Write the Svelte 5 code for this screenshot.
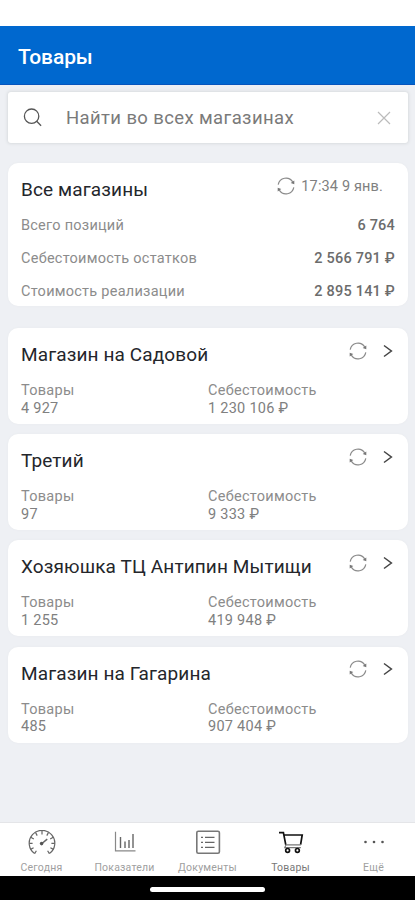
<script lang="ts">
  type Store = { name: string; count: string; cost: string }

  let query = $state('')

  const totals = [
    { label: 'Всего позиций', value: '6 764' },
    { label: 'Себестоимость остатков', value: '2 566 791 ₽' },
    { label: 'Стоимость реализации', value: '2 895 141 ₽' },
  ]

  const stores: Store[] = [
    { name: 'Магазин на Садовой', count: '4 927', cost: '1 230 106 ₽' },
    { name: 'Третий', count: '97', cost: '9 333 ₽' },
    { name: 'Хозяюшка ТЦ Антипин Мытищи', count: '1 255', cost: '419 948 ₽' },
    { name: 'Магазин на Гагарина', count: '485', cost: '907 404 ₽' },
  ]
</script>

{#snippet refresh()}
  <svg class="refresh" viewBox="0 0 18 18" width="18" height="18">
    <path d="M1.2 7.6A7.9 7.9 0 0 1 15.7 4.9M16.8 10.4A7.9 7.9 0 0 1 2.3 13.1" />
    <path class="tip" d="M17.3 3.4v3.8l-3.6-1.1zM.7 14.6v-3.8l3.6 1.1z" />
  </svg>
{/snippet}

<div class="screen">
  <header class="header">
    <h1>Товары</h1>
  </header>

  <main class="content">
    <label class="search">
      <svg class="search-icon" viewBox="0 0 20 20" width="20" height="20">
        <circle cx="8.6" cy="8.2" r="7.2" />
        <path d="M13.7 13.3l4.4 4.4" />
      </svg>
      <input type="text" placeholder="Найти во всех магазинах" bind:value={query} />
      <svg class="clear-icon" viewBox="0 0 14 14" width="14" height="14">
        <path d="M1 1l12 12M13 1L1 13" />
      </svg>
    </label>

    <section class="card summary">
      <div class="card-head">
        <h2>Все магазины</h2>
        <div class="updated">
          {@render refresh()}
          <span>17:34 9 янв.</span>
        </div>
      </div>
      {#each totals as row}
        <div class="total">
          <span class="total-label">{row.label}</span>
          <span class="total-value">{row.value}</span>
        </div>
      {/each}
    </section>

    <div class="stores">
      {#each stores as store}
        <section class="card store">
          <div class="card-head">
            <h2>{store.name}</h2>
            <div class="actions">
              {@render refresh()}
              <svg class="chevron" viewBox="0 0 10 14" width="10" height="14">
                <path d="M1 1.5l7.4 5.5L1 12.5" />
              </svg>
            </div>
          </div>
          <div class="stats">
            <div class="stat">
              <span>Товары</span>
              <span class="num">{store.count}</span>
            </div>
            <div class="stat">
              <span>Себестоимость</span>
              <span class="num">{store.cost}</span>
            </div>
          </div>
        </section>
      {/each}
    </div>
  </main>

  <nav class="tabs">
    <div class="tab">
      <svg viewBox="0 0 28 26" width="28" height="26">
        <path d="M6.6 23.6A12.8 12.8 0 1 1 21.4 23.6" />
        <path d="M14 1v3.4M7.6 2.6l1.6 3M20.4 2.6l-1.6 3M2.8 7.2l3 1.8M25.2 7.2l-3 1.8M1.2 13.3h3.4M26.8 13.3h-3.4M2.6 19.4l3-1.6M25.4 19.4l-3-1.6M6.6 23.6l1.8-2.8M21.4 23.6l-1.8-2.8" />
        <path d="M14.5 13l4.7-3.8" stroke-width="1.5" />
        <circle class="dot" cx="13.6" cy="13.6" r="1.8" />
      </svg>
      <span>Сегодня</span>
    </div>
    <div class="tab">
      <svg viewBox="0 0 28 26" width="28" height="26">
        <path d="M4.5 1.8v19h20" stroke="#888" />
        <path d="M9.5 7v11M14 11.5V18M18 10v8M22 4v14" stroke-width="1.4" />
      </svg>
      <span>Показатели</span>
    </div>
    <div class="tab">
      <svg viewBox="0 0 28 26" width="28" height="26">
        <rect x="2.8" y="1.3" width="22.6" height="22" rx="1.5" stroke="#777" stroke-width="1.6" />
        <path d="M11 7.3h9.5M11 12.3h9.5M11 17.3h9.5M7 7.3h2M7 12.3h2M7 17.3h2" />
      </svg>
      <span>Документы</span>
    </div>
    <div class="tab active">
      <svg viewBox="0 0 28 26" width="28" height="26">
        <path d="M2 2.7h4.4l2.4 12.2M6.8 5h18.4L23.6 14.6" />
        <path class="shelf" d="M8.8 14.8h15M9 14.8L7.8 17.6h16" />
        <circle cx="10.6" cy="20.4" r="1.9" />
        <circle cx="20.4" cy="20.4" r="1.9" />
      </svg>
      <span>Товары</span>
    </div>
    <div class="tab">
      <svg viewBox="0 0 28 26" width="28" height="26">
        <circle class="dot" cx="5.5" cy="12" r="1.3" />
        <circle class="dot" cx="14" cy="12" r="1.3" />
        <circle class="dot" cx="22.5" cy="12" r="1.3" />
      </svg>
      <span>Ещё</span>
    </div>
  </nav>

  <footer class="gesture"><i></i></footer>
</div>

<style>
  :global(body) {
    background: #fff;
  }

  .screen {
    display: flex;
    flex-direction: column;
    box-sizing: border-box;
    height: 900px;
    padding-top: 26px;
    overflow: hidden;
    font-family: Roboto, 'Noto Sans', sans-serif;
    color: #24262b;
  }

  h1,
  h2 {
    margin: 0;
  }

  svg {
    display: block;
    flex-shrink: 0;
    fill: none;
    stroke: #666;
    stroke-width: 1.2;
  }

  .header {
    display: flex;
    align-items: center;
    box-sizing: border-box;
    height: 59px;
    padding: 3px 18px 0;
    background: #0068cf;
    border-bottom: 1px solid #0755bd;
  }
  .header h1 {
    font-size: 21px;
    font-weight: 500;
    line-height: 28px;
    letter-spacing: -0.1px;
    color: #fff;
  }

  .content {
    flex: 1;
    padding: 7px 7px 0 8px;
    background: #eef0f4;
  }

  .search {
    display: flex;
    align-items: center;
    box-sizing: border-box;
    height: 51px;
    padding: 0 17px 0 15px;
    border-radius: 3px;
    background: #fff;
    box-shadow: 0 0 3px 1px #d9dcdf;
  }
  .search input {
    flex: 1;
    min-width: 0;
    margin-left: 23px;
    padding: 0;
    border: 0;
    outline: 0;
    background: none;
    font: 400 18.5px/24px Roboto, 'Noto Sans', sans-serif;
    letter-spacing: 0.38px;
    color: #333;
  }
  .search input::placeholder {
    color: #7a7a7a;
    opacity: 1;
  }
  .search-icon {
    stroke: #555;
    stroke-width: 1.3;
  }
  .clear-icon {
    stroke: #bbb;
  }

  .card {
    box-sizing: border-box;
    padding: 13px 13px 0;
    border-radius: 10px;
    background: #fff;
    box-shadow: 0 0 2px #e6e8eb;
  }
  .card-head {
    display: flex;
    justify-content: space-between;
    height: 33px;
  }
  .card-head h2 {
    padding-top: 1px;
    font-size: 19px;
    font-weight: 400;
    line-height: 26px;
    letter-spacing: 0.12px;
    white-space: nowrap;
  }

  .refresh {
    stroke: #8a8a8a;
  }
  .refresh .tip {
    fill: #777;
    stroke: none;
  }

  .summary {
    height: 143px;
    margin-top: 20px;
  }
  .updated {
    display: flex;
    align-items: center;
    gap: 6px;
    height: 20px;
    padding-right: 12px;
    font-size: 14.5px;
    letter-spacing: 0.15px;
    color: #808080;
  }
  .total {
    display: flex;
    justify-content: space-between;
    height: 33px;
    font-size: 14.5px;
    line-height: 33px;
    color: #8c8c8c;
  }
  .total-label {
    letter-spacing: 0.25px;
  }
  .total-value {
    font-weight: 500;
    letter-spacing: 0.2px;
    color: #6c6c6c;
  }

  .stores {
    display: flex;
    flex-direction: column;
    gap: 10.2px;
    margin-top: 22px;
  }
  .store {
    height: 96px;
  }
  .store .card-head {
    height: 41px;
  }
  .actions {
    display: flex;
    align-items: center;
    gap: 16px;
    height: 19px;
    padding-right: 2px;
  }
  .chevron {
    stroke: #444;
    stroke-width: 1.5;
  }
  .stats {
    display: grid;
    grid-template-columns: 1fr 1fr;
    font-size: 14.5px;
    line-height: 17.5px;
    letter-spacing: 0.27px;
    color: #8c8c8c;
  }
  .stat {
    display: flex;
    flex-direction: column;
  }
  .num {
    color: #808080;
  }

  .tabs {
    display: flex;
    box-sizing: border-box;
    height: 54px;
    border-top: 1px solid #e4e5e8;
    background: #fff;
  }
  .tab {
    display: flex;
    flex: 1;
    flex-direction: column;
    align-items: center;
    padding-top: 7px;
    font-size: 10.5px;
    line-height: 14px;
    letter-spacing: 0.2px;
    color: #a0a0a0;
  }
  .tab span {
    margin-top: 5px;
  }
  .tab .dot {
    fill: #555;
    stroke: none;
  }
  .tab.active {
    color: #777;
  }
  .tab.active svg {
    stroke: #111;
    stroke-width: 1.7;
  }
  .tab.active .shelf {
    stroke: #777;
    stroke-width: 1.2;
  }

  .gesture {
    display: flex;
    justify-content: center;
    height: 24px;
    background: #000;
  }
  .gesture i {
    width: 115px;
    height: 5px;
    margin-top: 11px;
    border-radius: 3px;
    background: #fff;
  }
</style>
